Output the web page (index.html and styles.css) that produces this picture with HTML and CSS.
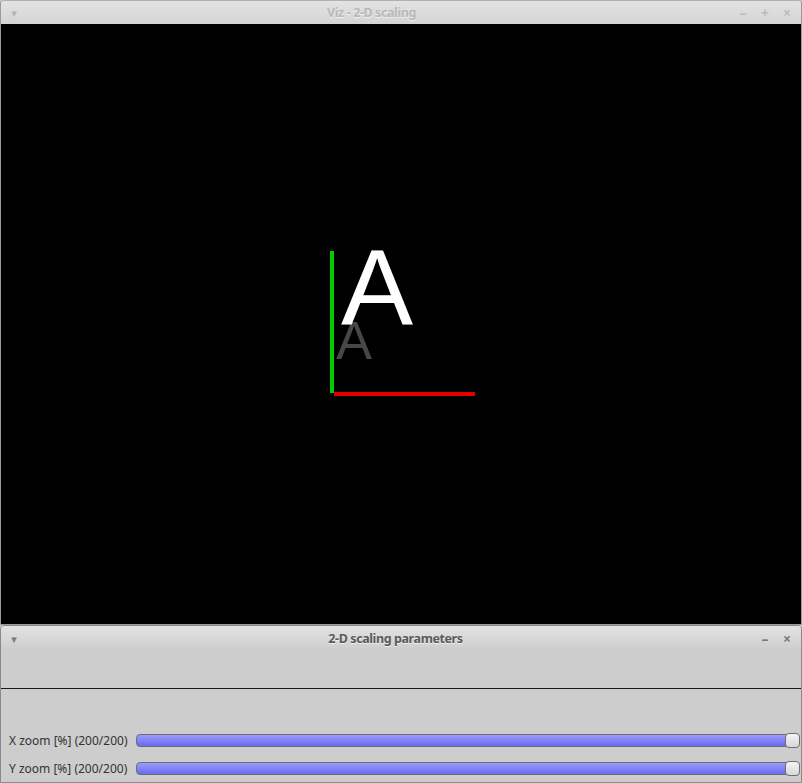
FILE: index.html
```html
<!DOCTYPE html>
<html>
<head>
<meta charset="utf-8">
<link rel="stylesheet" href="styles.css">
</head>
<body>
<div class="win win-top">
  <div class="titlebar inactive">
    <span class="menu-btn">▾</span>
    <span class="title">Viz - 2-D scaling</span>
    <span class="ctrls"><span class="c-min">–</span><span class="c-max">+</span><span class="c-close">×</span></span>
  </div>
  <div class="canvas">
    <div class="axis-y"></div>
    <div class="axis-x"></div>
    <span class="glyph small">A</span>
    <span class="glyph big">A</span>
  </div>
</div>
<div class="win win-bottom">
  <div class="titlebar active">
    <span class="menu-btn">▾</span>
    <span class="title">2-D scaling parameters</span>
    <span class="ctrls"><span class="c-min">–</span><span class="c-close">×</span></span>
  </div>
  <div class="blank"></div>
  <div class="params">
    <div class="row">
      <span class="label">X zoom [%] (200/200)</span>
      <div class="slider"><div class="fill"></div><div class="thumb"></div></div>
    </div>
    <div class="row">
      <span class="label">Y zoom [%] (200/200)</span>
      <div class="slider"><div class="fill"></div><div class="thumb"></div></div>
    </div>
  </div>
</div>
</body>
</html>
```
FILE: styles.css
```css
html, body {
  margin: 0;
  padding: 0;
  background: #cdcdcd;
  width: 802px;
  height: 783px;
  overflow: hidden;
  font-family: "Noto Sans", "DejaVu Sans", sans-serif;
}
.win {
  box-sizing: border-box;
  display: flex;
  flex-direction: column;
  border: 1px solid #9a9a9a;
  border-top-color: #b0b0b0;
  border-radius: 4px 4px 0 0;
  overflow: hidden;
}
.win-top {
  height: 625px;
}
.win-bottom {
  height: 158px;
  background: #cdcdcd;
  border-color: #8a8a8a;
}
.titlebar {
  flex: none;
  height: 23px;
  display: flex;
  align-items: center;
  position: relative;
  background: linear-gradient(#e3e3e3, #d4d4d4);
}
.win-bottom .titlebar {
  height: 24px;
  background: linear-gradient(#e2e2e2 0%, #d6d6d6 60%, #cdcdcd 100%);
}
.menu-btn {
  font-size: 11px;
  width: 24px;
  text-align: center;
  color: #b5b5b5;
  margin-left: 1px;
}
.title {
  flex: 1;
  text-align: center;
  font-size: 12.5px;
  font-weight: bold;
  letter-spacing: -0.4px;
  color: #b8b8b8;
  text-shadow: 0 1px 0 #f0f0f0;
  padding-right: 20px;
}
.ctrls {
  display: flex;
  gap: 10px;
  margin-right: 8px;
  font-size: 14px;
  font-weight: bold;
  color: #bdbdbd;
}
.ctrls span { width: 12px; text-align: center; }
.active .menu-btn { color: #7a7a7a; }
.active .title { color: #5a5a5a; padding-right: 30px; padding-left: 36px; }
.active .ctrls { color: #7a7a7a; }
.canvas {
  flex: 1;
  background: #000;
  position: relative;
}
.axis-y {
  position: absolute;
  left: 329px;
  top: 227px;
  width: 4px;
  height: 142px;
  background: #00cc00;
}
.axis-x {
  position: absolute;
  left: 333px;
  top: 368px;
  width: 141px;
  height: 4px;
  background: #e00000;
}
.glyph {
  position: absolute;
  font-family: "Liberation Sans", Arial, sans-serif;
  line-height: 1;
}
.small {
  color: #474747;
  font-size: 54px;
  left: 335px;
  top: 289px;
}
.big {
  color: #ffffff;
  font-size: 108px;
  left: 340px;
  top: 210px;
}
.blank {
  height: 38px;
  border-bottom: 1px solid #1a1a1a;
  flex: none;
}
.params {
  flex: 1;
  display: flex;
  flex-direction: column;
  padding-top: 44px;
  gap: 13px;
}
.row {
  display: flex;
  align-items: center;
  height: 15px;
}
.label {
  width: 134px;
  padding-left: 8px;
  box-sizing: border-box;
  font-size: 12px;
  color: #333;
  white-space: nowrap;
}
.slider {
  position: relative;
  flex: 1;
  height: 13px;
  margin-left: 1px;
  margin-right: 1px;
}
.fill {
  position: absolute;
  left: 0;
  right: 8px;
  top: 0;
  bottom: 0;
  box-sizing: border-box;
  border: 1px solid #6e6e6e;
  border-radius: 4px;
  background: linear-gradient(#9b9bff, #6a6af0);
}
.thumb {
  position: absolute;
  right: 0;
  top: -1px;
  width: 15px;
  height: 15px;
  box-sizing: border-box;
  border: 1px solid #6e6e6e;
  border-radius: 4px;
  background: linear-gradient(#f4f4f4, #d8d8d8);
}
```
